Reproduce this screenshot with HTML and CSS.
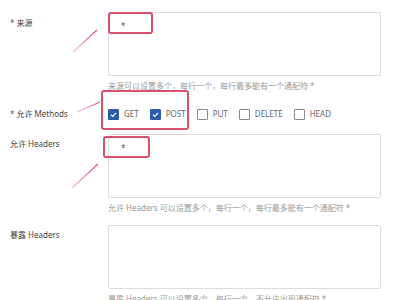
FILE: index.html
```html
<!DOCTYPE html>
<html lang="zh-CN">
<head>
    <meta charset="UTF-8">
    <title>跨域设置</title>
    <link rel="stylesheet" href="styles.css">
</head>
<body>
    <div class="page">
        <div class="form-item item-origin">
            <label class="item-label"><span class="req">*</span> 来源</label>
            <div class="item-control">
                <textarea class="field">*</textarea>
                <div class="help">来源可以设置多个，每行一个，每行最多能有一个通配符 *</div>
            </div>
        </div>

        <div class="form-item item-methods">
            <label class="item-label"><span class="req">*</span> 允许 Methods</label>
            <div class="item-control checks">
                <span class="check-opt"><span class="box checked"><svg viewBox="0 0 10 10"><path d="M2.2 5.2 L4.2 7.1 L7.9 3.2" /></svg></span>GET</span>
                <span class="check-opt"><span class="box checked"><svg viewBox="0 0 10 10"><path d="M2.2 5.2 L4.2 7.1 L7.9 3.2" /></svg></span>POST</span>
                <span class="check-opt"><span class="box"></span>PUT</span>
                <span class="check-opt"><span class="box"></span>DELETE</span>
                <span class="check-opt"><span class="box"></span>HEAD</span>
            </div>
        </div>

        <div class="form-item item-allow">
            <label class="item-label">允许 Headers</label>
            <div class="item-control">
                <textarea class="field">*</textarea>
                <div class="help">允许 Headers 可以设置多个，每行一个，每行最多能有一个通配符 *</div>
            </div>
        </div>

        <div class="form-item item-expose">
            <label class="item-label">暴露 Headers</label>
            <div class="item-control">
                <textarea class="field"></textarea>
                <div class="help">暴露 Headers 可以设置多个，每行一个，不允许出现通配符 *</div>
            </div>
        </div>

        <!-- 标注 -->
        <svg class="marks" viewBox="0 0 400 300">
            <defs>
                <linearGradient id="fade" x1="1" y1="0" x2="0" y2="1">
                    <stop offset="0" stop-color="#d9506b" />
                    <stop offset="1" stop-color="#d9506b" stop-opacity="0.3" />
                </linearGradient>
            </defs>
            <rect x="109" y="13" width="43" height="20" rx="2" />
            <rect x="102" y="91" width="86" height="38" rx="2" />
            <rect x="104" y="137" width="45" height="20" rx="2" />
            <line x1="97" y1="30" x2="73" y2="52" />
            <line x1="100" y1="102" x2="77" y2="112" />
            <line x1="98" y1="164" x2="72" y2="188" />
        </svg>
    </div>
</body>
</html>
```

FILE: styles.css
```css
* {
    box-sizing: border-box;
    margin: 0;
    padding: 0;
}

body {
    background-color: #fff;
    color: #444;
    font-family: "Noto Sans", "Noto Sans CJK SC", sans-serif;
    font-size: 8px;
}

.page {
    position: relative;
    width: 400px;
    height: 300px;
    padding-top: 12px;
    overflow: hidden;
}

.form-item {
    display: flex;
    margin-bottom: 12px;
}

.item-origin {
    margin-bottom: 14px;
}

.item-methods {
    margin-bottom: 13px;
}

.item-allow {
    margin-bottom: 10px;
}

.item-label {
    width: 108px;
    padding-left: 10px;
    padding-top: 3px;
    line-height: 14px;
    color: #444;
}

.item-origin .item-label {
    padding-top: 4px;
}

.item-methods .item-label {
    padding-top: 0;
}

.req {
    color: #666;
}

.item-control {
    width: 273px;
}

.field {
    display: block;
    width: 273px;
    height: 64px;
    padding: 7px 12px;
    border: 1px solid #dcdcdc;
    border-radius: 2px;
    resize: none;
    font-family: inherit;
    font-size: 8px;
    line-height: 12px;
    color: #555;
    background: #fff;
}

.help {
    margin-top: 3px;
    line-height: 14px;
    color: #9a9a9a;
}

.checks {
    display: flex;
    align-items: center;
    height: 14px;
}

.check-opt {
    display: flex;
    align-items: center;
    margin-right: 11px;
    color: #666;
    line-height: 14px;
}

.box {
    width: 11px;
    height: 11px;
    margin-right: 5px;
    border: 1px solid #8a8a8a;
    border-radius: 1px;
    background: #fff;
}

.box.checked {
    border-color: #2b5ca6;
    background: #2b5ca6;
}

.box svg {
    display: block;
    width: 9px;
    height: 9px;
    fill: none;
    stroke: #fff;
    stroke-width: 1.4;
}

.marks {
    position: absolute;
    left: 0;
    top: 0;
    width: 400px;
    height: 300px;
    pointer-events: none;
}

.marks rect {
    fill: none;
    stroke: #d9506b;
    stroke-width: 2;
}

.marks line {
    stroke: url(#fade);
    stroke-width: 1.2;
}
```
